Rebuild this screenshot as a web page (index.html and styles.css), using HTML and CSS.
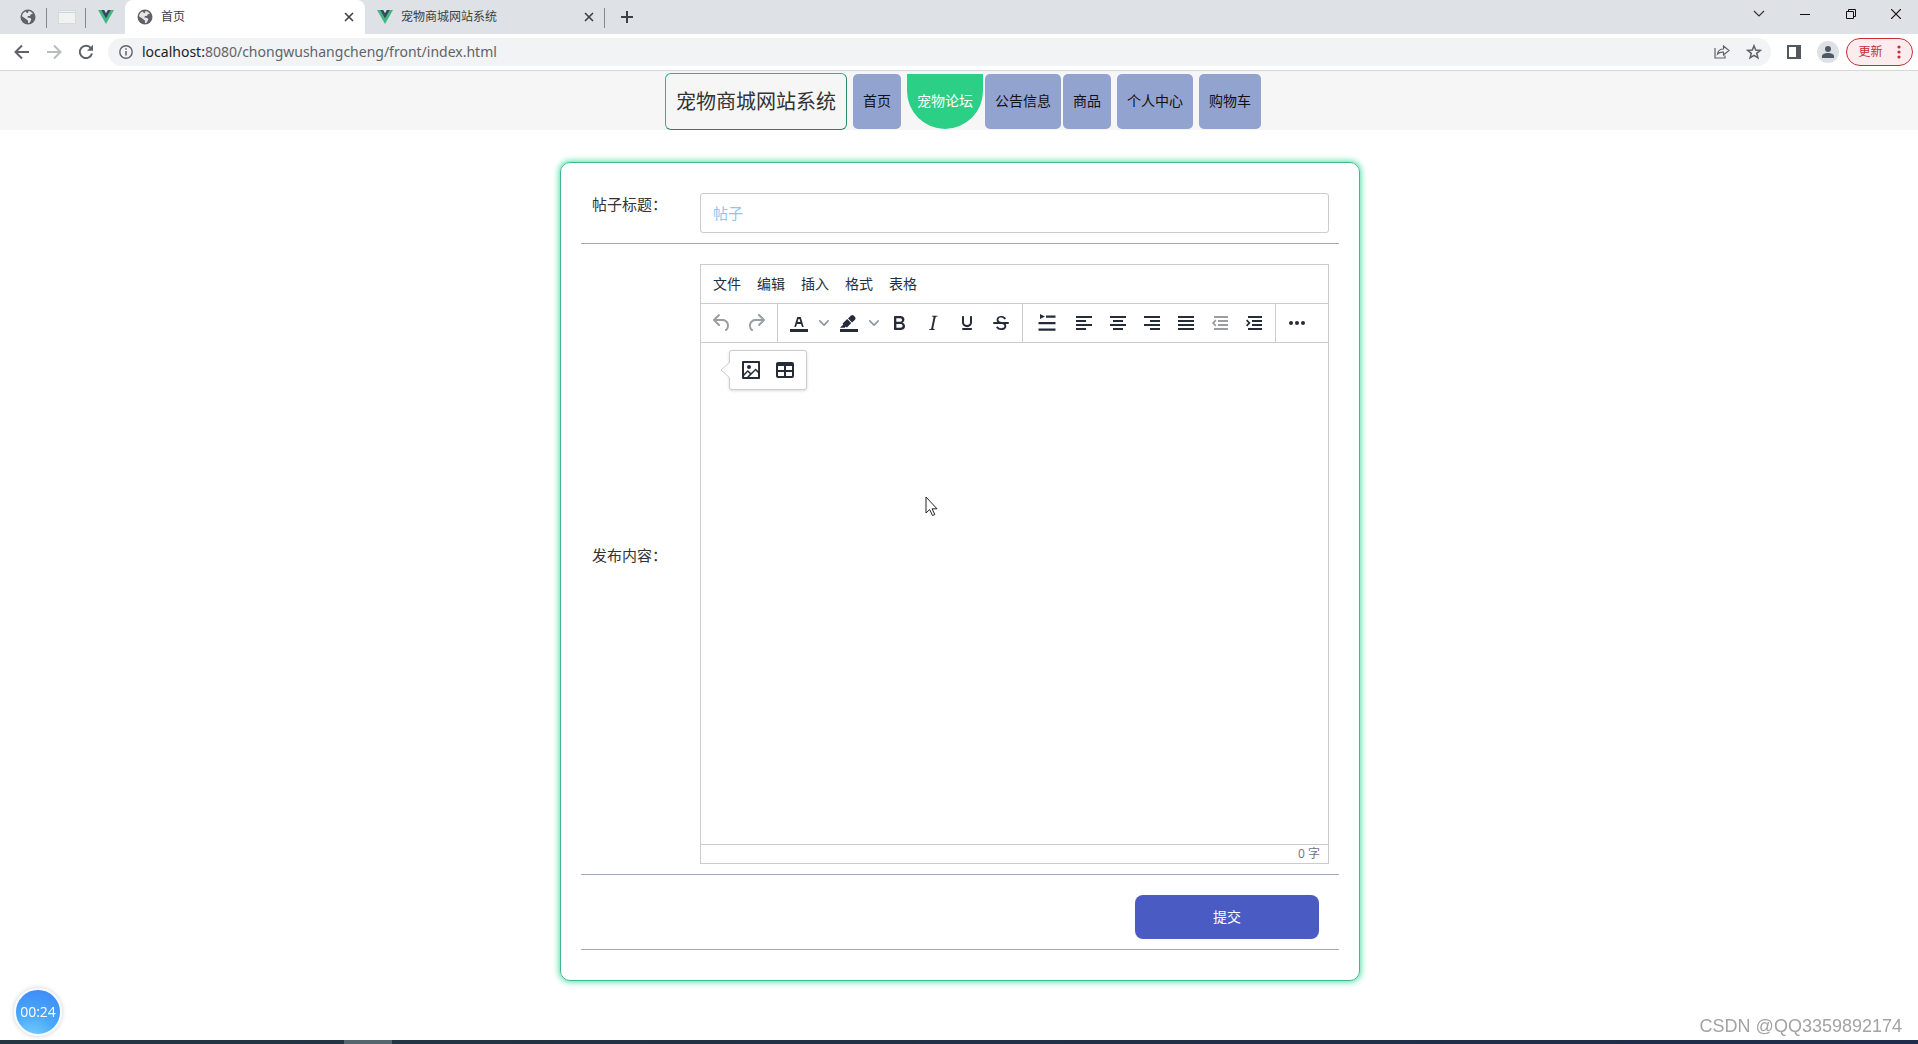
FILE: index.html
```html
<!DOCTYPE html>
<html lang="zh-CN">
<head>
<meta charset="utf-8">
<title>首页</title>
<link rel="stylesheet" href="styles.css">
</head>
<body>
<svg class="defs" aria-hidden="true">
  <symbol id="globe" viewBox="0 0 16 16"><circle cx="8" cy="8" r="7.5" fill="#5f6368"/><path d="M8.500 2c2 .2 3.500 1.300 4.300 3l-2 .2-.9 1.700-2 .2-.5 1.400 3 .5.900 1.500-1.600 3.300-1.800.2.200-2.300L6 10 2 7.300C2.300 4.700 4 3 6 2.500l.4 1.300 1.600.2z" fill="#e4e7ea"/></symbol>
  <symbol id="vue" viewBox="0 0 16 14"><path d="M0 0h3.500L8 7.800 12.500 0H16L8 14z" fill="#41b883"/><path d="M3.200 0h3L8 3.200 9.800 0h3L8 8.500z" fill="#34495e"/></symbol>
  <symbol id="cross" viewBox="0 0 10 10"><path d="M1 1l8 8M9 1l-8 8" stroke="currentColor" stroke-width="1.600" fill="none"/></symbol>
  <symbol id="caret" viewBox="0 0 10 10"><path d="M8.700 2.200c.3-.3.8-.3 1 0 .4.4.4.9 0 1.200L5.700 7.800c-.3.3-.9.3-1.200 0L.2 3.400a.8.8 0 010-1.200c.3-.3.8-.3 1.100 0L5 6l3.700-3.800z"/></symbol>
</svg>

<header class="browser">
  <div class="tabstrip">
    <button class="pinned" aria-label="页面"><svg width="16" height="16"><use href="#globe"/></svg></button>
    <button class="pinned" aria-label="文档"><svg width="18" height="14" viewBox="0 0 18 14"><rect x=".5" y=".5" width="17" height="13" fill="#f0f3f2" stroke="#d3dcd8"/><path d="M1 2.500h16" stroke="#c3dccf"/></svg></button>
    <button class="pinned" aria-label="Vue"><svg width="16" height="14"><use href="#vue"/></svg></button>
    <div class="tab active">
      <svg width="16" height="16"><use href="#globe"/></svg><span class="tab-title">首页</span>
      <button class="close" aria-label="关闭"><svg width="10" height="10"><use href="#cross"/></svg></button>
    </div>
    <div class="tab">
      <svg width="16" height="14"><use href="#vue"/></svg><span class="tab-title">宠物商城网站系统</span>
      <button class="close" aria-label="关闭"><svg width="10" height="10"><use href="#cross"/></svg></button>
    </div>
    <button class="new-tab" aria-label="新标签页"><svg width="12" height="12" viewBox="0 0 12 12"><path d="M6 0v12M0 6h12" stroke="#3c4043" stroke-width="2"/></svg></button>
    <div class="window-controls">
      <button aria-label="搜索标签页"><svg width="12" height="8" viewBox="0 0 12 8"><path d="M1 1l5 5 5-5" fill="none" stroke="#333" stroke-width="1.200"/></svg></button>
      <button aria-label="最小化"><svg width="10" height="10" viewBox="0 0 10 10"><path d="M0 5.500h10" stroke="#111"/></svg></button>
      <button aria-label="还原"><svg width="10" height="10" viewBox="0 0 10 10"><path d="M.5 2.500h7v7h-7zM2.500 2.500v-2h7v7h-2" fill="none" stroke="#111"/></svg></button>
      <button aria-label="关闭窗口"><svg width="10" height="10" viewBox="0 0 10 10"><path d="M0 0l10 10M10 0L0 10" stroke="#111" stroke-width="1.200"/></svg></button>
    </div>
  </div>
  <div class="toolbar">
    <button class="nav-btn" aria-label="后退"><svg width="16" height="16" viewBox="0 0 16 16"><path d="M15 8H2M8 1.500L1.500 8 8 14.500" fill="none" stroke="#5f6368" stroke-width="2"/></svg></button>
    <button class="nav-btn" aria-label="前进"><svg width="16" height="16" viewBox="0 0 16 16"><path d="M1 8h13M8 1.500L14.500 8 8 14.500" fill="none" stroke="#b9bcbf" stroke-width="2"/></svg></button>
    <button class="nav-btn" aria-label="刷新"><svg width="16" height="16" viewBox="0 0 16 16"><path d="M13 4.200A6.200 6.200 0 1014 9.500" fill="none" stroke="#5f6368" stroke-width="2"/><path d="M15 .8v6H9z" fill="#5f6368"/></svg></button>
    <div class="omnibox">
      <svg width="14" height="14" viewBox="0 0 14 14"><circle cx="7" cy="7" r="6.200" fill="none" stroke="#5f6368" stroke-width="1.400"/><path d="M7 6v4.500M7 3.300v1.500" stroke="#5f6368" stroke-width="1.500"/></svg>
      <a class="url" href="#"><span class="host">localhost:</span>8080/chongwushangcheng/front/index.html</a>
      <button aria-label="分享"><svg width="16" height="14" viewBox="0 0 16 14"><path d="M1 3v10h10v-2.500M3.500 9c.5-3.500 2.500-5 6-5V1L15 5.500 9.500 10V7.200C7 7 5 7.500 3.500 9z" fill="none" stroke="#5f6368" stroke-width="1.200"/></svg></button>
      <button aria-label="收藏"><svg width="16" height="16" viewBox="0 0 16 16"><path d="M8 1.800l1.700 4.300 4.500.3-3.500 2.900 1.200 4.500L8 11.300l-3.900 2.500 1.200-4.500-3.500-2.900 4.500-.3z" fill="none" stroke="#5f6368" stroke-width="1.500"/></svg></button>
    </div>
    <button class="panel" aria-label="侧边栏"><svg width="14" height="14" viewBox="0 0 14 14"><path d="M1 1h12v12H1z" fill="none" stroke="#54585c" stroke-width="2"/><path d="M9 1h4v12H9z" fill="#54585c"/></svg></button>
    <button class="avatar" aria-label="用户"><svg width="22" height="22" viewBox="0 0 22 22"><circle cx="11" cy="11" r="11" fill="#dde1e6"/><circle cx="11" cy="8" r="3" fill="#4d5a66"/><path d="M5 17v-2c0-2 3-3 6-3s6 1 6 3v2z" fill="#4d5a66"/></svg></button>
    <button class="update">更新<svg width="4" height="14" viewBox="0 0 4 14"><g fill="#c03038"><circle cx="2" cy="2" r="1.600"/><circle cx="2" cy="7" r="1.600"/><circle cx="2" cy="12" r="1.600"/></g></svg></button>
  </div>
</header>

<nav class="site-nav">
  <h1 class="brand">宠物商城网站系统</h1>
  <a href="#">首页</a>
  <div class="nav-group">
    <a href="#" class="current">宠物论坛</a>
    <a href="#">公告信息</a>
    <a href="#">商品</a>
  </div>
  <a href="#">个人中心</a>
  <a href="#">购物车</a>
</nav>

<main>
  <form class="card">
    <div class="row">
      <label for="title">帖子标题：</label>
      <input id="title" type="text" placeholder="帖子">
    </div>
    <div class="row">
      <label for="content">发布内容：</label>
      <div class="editor">
        <div class="menubar">
          <button type="button">文件</button><button type="button">编辑</button><button type="button">插入</button><button type="button">格式</button><button type="button">表格</button>
        </div>
        <div class="tools">
          <div class="group">
            <button type="button" class="off" aria-label="撤销"><svg viewBox="0 0 24 24"><path d="M6.400 8H12c3.700 0 6.200 2 6.800 5.100.6 2.700-.4 5.600-2.300 6.800a1 1 0 01-1-1.800c1.100-.6 1.800-2.700 1.400-4.600-.5-2.100-2.100-3.500-4.900-3.500H6.400l3.300 3.300a1 1 0 11-1.400 1.400l-5-5a1 1 0 010-1.400l5-5a1 1 0 011.400 1.400L6.400 8z"/></svg></button>
            <button type="button" class="off" aria-label="重做"><svg viewBox="0 0 24 24"><path d="M17.600 10H12c-2.800 0-4.400 1.400-4.900 3.500-.4 2 .3 4 1.400 4.600a1 1 0 11-1 1.800c-2-1.200-2.900-4.100-2.300-6.800.6-3 3-5.100 6.800-5.100h5.600l-3.300-3.300a1 1 0 111.400-1.400l5 5a1 1 0 010 1.400l-5 5a1 1 0 01-1.400-1.400l3.300-3.300z"/></svg></button>
          </div>
          <div class="group">
            <button type="button" aria-label="文字颜色"><svg viewBox="0 0 24 24"><path d="M3 18h18v3H3zM8.700 16h-.8a.5.5 0 01-.5-.6l2.700-9c.1-.3.3-.4.5-.4h2.800c.2 0 .4.1.5.4l2.700 9a.5.5 0 01-.5.600h-.8a.5.5 0 01-.4-.4l-.7-2.200c0-.3-.3-.4-.5-.4h-3.400c-.2 0-.4.1-.5.4l-.7 2.200c0 .3-.2.4-.4.4zm2.600-7.600l-.6 2a.5.5 0 00.5.600h1.600a.5.5 0 00.5-.6l-.6-2c0-.3-.3-.4-.5-.4h-.4c-.2 0-.4.1-.5.4z"/></svg></button>
            <button type="button" class="more" aria-label="更多文字颜色"><svg><use href="#caret"/></svg></button>
            <button type="button" aria-label="背景色"><svg viewBox="0 0 24 24"><path d="M3 18h18v3H3zM7.700 16.700H3l3.300-3.300-.7-.8L10.200 8l4 4.100-4 4.200c-.2.2-.6.2-.8 0l-.6-.7-1.100 1.100zm3.300-9.300l3-2.900a2 2 0 012.600 0L18 6c.7.7.7 2 0 2.700l-2.900 2.900z"/></svg></button>
            <button type="button" class="more" aria-label="更多背景色"><svg><use href="#caret"/></svg></button>
            <button type="button" aria-label="粗体"><svg viewBox="0 0 24 24"><path d="M7.800 19c-.3 0-.5 0-.6-.2l-.2-.5V5.700c0-.2 0-.4.2-.5l.6-.2h5c1.500 0 2.700.3 3.500 1 .7.600 1.100 1.400 1.100 2.500a3 3 0 01-.6 1.900c-.4.600-1 1-1.600 1.200.4.1.9.3 1.300.600s.8.700 1 1.200c.4.4.5 1 .5 1.600 0 1.300-.4 2.300-1.300 3-.8.700-2.100 1-3.800 1H7.800zm5-8.300c.6 0 1.200-.1 1.600-.5.4-.3.6-.7.6-1.300 0-1.100-.8-1.700-2.300-1.700H9.300v3.500h3.400zm.5 6c.7 0 1.300-.1 1.700-.4.4-.4.6-.9.6-1.500s-.2-1-.7-1.400c-.4-.3-1-.4-2-.4H9.400v3.800h4z" fill-rule="evenodd"/></svg></button>
            <button type="button" aria-label="斜体"><svg viewBox="0 0 24 24"><path d="M16.700 4.700l-.1.900h-.3c-.6 0-1 0-1.400.3-.3.3-.4.6-.5 1.100l-2.100 9.800v.6c0 .5.4.8 1.400.8h.2l-.2.8H8l.2-.8h.2c1.100 0 1.800-.5 2-1.500l2-9.800.1-.5c0-.6-.4-.8-1.400-.8h-.3l.2-.9h5.800z"/></svg></button>
            <button type="button" aria-label="下划线"><svg viewBox="0 0 24 24"><path d="M16 5c.6 0 1 .4 1 1v5.500a4 4 0 01-.4 1.800l-1 1.400a5.300 5.300 0 01-5.500 1 5 5 0 01-1.600-1c-.5-.4-.8-.9-1.100-1.400a4 4 0 01-.4-1.800V6c0-.6.4-1 1-1s1 .4 1 1v5.500c0 .3 0 .6.2 1l.6.7a3.300 3.300 0 002.200.8 3.400 3.400 0 002.200-.8c.3-.2.4-.5.6-.8l.2-.9V6c0-.6.4-1 1-1zM8 17h8c.6 0 1 .4 1 1s-.4 1-1 1H8a1 1 0 010-2z"/></svg></button>
            <button type="button" aria-label="删除线"><svg viewBox="0 0 24 24"><path d="M15.600 8.500c-.5-.7-1-1.100-1.300-1.300-.6-.4-1.300-.6-2-.6-2.700 0-2.800 1.700-2.800 2.100 0 1.600 1.800 2 3.200 2.300 4.400.9 4.600 2.800 4.600 3.900 0 1.400-.7 4.100-5 4.100A6.200 6.200 0 017 16.400l1.500-1.100c.4.6 1.600 2 3.700 2 1.600 0 2.500-.4 3-1.200.4-.8.3-2-.8-2.600-.7-.4-1.600-.7-2.900-1-1-.2-3.900-.8-3.900-3.600C7.600 6 10.300 5 12.400 5c2.900 0 4.200 1.600 4.700 2.400l-1.500 1.100zM5 11h14a1 1 0 010 2H5a1 1 0 010-2z"/></svg></button>
          </div>
          <div class="group">
            <button type="button" class="wide" aria-label="首行缩进"><svg viewBox="0 0 24 24"><path d="M3.500 11h17v2.200h-17zM3.500 17.500h17v2.200h-17zM11 4.500h9.500v2.200H11zM5 3l5 2.600L5 8z"/></svg></button>
            <button type="button" aria-label="左对齐"><svg viewBox="0 0 24 24"><path d="M4 5h16v2H4zM4 9h10v2H4zM4 13h16v2H4zM4 17h10v2H4z"/></svg></button>
            <button type="button" aria-label="居中"><svg viewBox="0 0 24 24"><path d="M4 5h16v2H4zM7 9h10v2H7zM4 13h16v2H4zM7 17h10v2H7z"/></svg></button>
            <button type="button" aria-label="右对齐"><svg viewBox="0 0 24 24"><path d="M4 5h16v2H4zM10 9h10v2H10zM4 13h16v2H4zM10 17h10v2H10z"/></svg></button>
            <button type="button" aria-label="两端对齐"><svg viewBox="0 0 24 24"><path d="M4 5h16v2H4zM4 9h16v2H4zM4 13h16v2H4zM4 17h16v2H4z"/></svg></button>
            <button type="button" class="off" aria-label="减少缩进"><svg viewBox="0 0 24 24"><path d="M6 5h14v2H6zM10 9h10v2H10zM10 13h10v2H10zM6 17h14v2H6zM7.300 8.600L8.500 9.800 6.300 12l2.200 2.200-1.200 1.200L3.900 12z"/></svg></button>
            <button type="button" aria-label="增加缩进"><svg viewBox="0 0 24 24"><path d="M6 5h14v2H6zM10 9h10v2H10zM10 13h10v2H10zM6 17h14v2H6zM5.200 8.600L4 9.800 6.200 12 4 14.200l1.200 1.200L8.600 12z"/></svg></button>
          </div>
          <div class="group">
            <button type="button" aria-label="更多"><svg viewBox="0 0 24 24"><circle cx="6" cy="12" r="2"/><circle cx="12" cy="12" r="2"/><circle cx="18" cy="12" r="2"/></svg></button>
          </div>
        </div>
        <div class="canvas">
          <textarea id="content"></textarea>
          <div class="quickbar">
            <svg class="tip" width="10" height="18" viewBox="0 0 10 18"><path d="M10 1L1 9l9 8" fill="#fff" stroke="#ccc"/></svg>
            <button type="button" aria-label="插入图片"><svg viewBox="0 0 24 24"><path fill-rule="evenodd" d="M5 15.700l3.300-3.200c.3-.3.7-.3 1 0L12 15l4.100-4c.3-.4.8-.4 1 0l2 1.900V5H5v10.700zM5 18V19h3l2.800-2.900-2-2L5 17.900zm14-3l-2.500-2.400-6.400 6.500H19v-4zM4 3h16c.6 0 1 .4 1 1v16c0 .6-.4 1-1 1H4a1 1 0 01-1-1V4c0-.6.4-1 1-1z"/><circle cx="10" cy="9" r="2"/></svg></button>
            <button type="button" aria-label="插入表格"><svg viewBox="0 0 24 24"><path fill-rule="evenodd" d="M19 4a2 2 0 012 2v12a2 2 0 01-2 2H5a2 2 0 01-2-2V6c0-1.100.9-2 2-2h14zM5 14v4h6v-4H5zm14 0h-6v4h6v-4zm0-6h-6v4h6V8zM5 12h6V8H5v4z"/></svg></button>
          </div>
          <svg class="pointer" width="14" height="21" viewBox="0 0 14 21"><path d="M1 1v16l3.700-3.500L7.500 19.500l2.300-1-2.700-5.700H12z" fill="#fff" stroke="#222"/></svg>
        </div>
        <div class="status">0 字</div>
      </div>
    </div>
    <div class="row actions">
      <button type="submit" class="submit">提交</button>
    </div>
  </form>
</main>

<div class="timer">00:24</div>
<div class="watermark">CSDN @QQ3359892174</div>
<footer class="taskbar"><span></span></footer>
</body>
</html>
```
FILE: styles.css
```css
* { box-sizing: border-box; }
body {
  margin: 0;
  min-height: 100vh;
  background: #fff;
  color: #333;
  font: 14px/20px "Open Sans", "Noto Sans CJK SC", sans-serif;
}
button, input, textarea { font: inherit; color: inherit; }
button { display: flex; align-items: center; justify-content: center; padding: 0; border: 0; background: none; }
a { color: inherit; text-decoration: none; }
svg { flex: none; display: block; }
.defs { position: absolute; width: 0; height: 0; }

/* browser frame */
.browser { border-bottom: 1px solid #d5d6d8; }
.tabstrip { display: flex; height: 34px; padding-left: 8px; background: #dee1e6; }
.pinned { position: relative; width: 39px; }
.pinned:nth-child(-n+2)::after,
.tab:not(.active)::after {
  content: "";
  position: absolute;
  right: 0;
  top: 8px;
  width: 1px;
  height: 20px;
  background: #85898e;
}
.tab {
  position: relative;
  display: flex;
  align-items: center;
  gap: 8px;
  width: 240px;
  padding: 0 11px 0 12px;
  font-size: 12px;
  color: #3c4043;
}
.tab.active { background: #fff; border-radius: 8px 8px 0 0; }
.tab-title { flex: 1; }
.close { width: 10px; color: #3c4043; }
.new-tab { width: 44px; }
.window-controls { display: flex; margin-left: auto; height: 28px; }
.window-controls button { width: 46px; }
.window-controls button:last-child { width: 44px; }

.toolbar { display: flex; align-items: center; height: 36px; padding: 0 5px 0 6px; background: #fff; }
.nav-btn { width: 32px; }
.omnibox {
  flex: 1;
  display: flex;
  align-items: center;
  height: 28px;
  margin-left: 6px;
  padding: 0 1px 0 11px;
  border-radius: 14px;
  background: #f1f3f4;
}
.url { flex: 1; margin-left: 9px; color: #5f6368; font-family: "Noto Sans", sans-serif; }
.host { color: #202124; }
.omnibox button { width: 32px; }
.panel { width: 46px; }
.avatar { width: 22px; margin-right: 7px; }
.update {
  gap: 14px;
  width: 67px;
  height: 28px;
  border: 1px solid #c03038;
  border-radius: 14px;
  background: #fdeced;
  color: #c03038;
  font-size: 12px;
}

/* site navigation */
.site-nav {
  display: flex;
  justify-content: center;
  align-items: center;
  gap: 6px;
  padding: 2px 0 0 8px;
  background: #f6f6f6;
}
.brand {
  margin: 0;
  padding: 0 10px;
  border: 1px solid;
  border-color: #35b189 #2e8b6e #2f7f66 #35b189;
  border-radius: 6px;
  font-size: 20px;
  font-weight: 400;
  line-height: 55px;
}
.nav-group { display: flex; gap: 2px; }
.site-nav a {
  padding: 0 10px 2px;
  border-radius: 5px;
  background: #93a3cf;
  color: #111;
  line-height: 53px;
}
.site-nav .current { border-radius: 0 0 38px 38px; background: #2bcf85; color: #fff; }

/* post form */
main { padding: 32px 0 60px 2px; }
.card {
  max-width: 800px;
  margin: 0 auto;
  padding: 10px 20px 30px;
  border: 1px solid #3fb88f;
  border-radius: 10px;
  box-shadow: 0 0 6px 1px #4fe0a5;
}
.row {
  display: flex;
  align-items: center;
  padding: 20px 10px 10px;
  border-bottom: 1px solid #a0a6bc;
}
.row label { width: 109px; padding: 0 0 18px 1px; font-size: 15px; }
.row input {
  flex: 1;
  height: 40px;
  padding: 0 12px;
  border: 1px solid #ccc;
  border-radius: 3px;
  font-size: 15px;
  outline: 0;
}
.row input::placeholder { color: #8ec5f2; }
.editor { flex: 1; display: flex; flex-direction: column; height: 600px; border: 1px solid #ccc; }
.menubar { display: flex; height: 39px; padding: 0 4px; border-bottom: 1px solid #ccc; color: #222f3e; }
.menubar button { padding: 0 8px; }
.tools { display: flex; height: 39px; border-bottom: 1px solid #ccc; }
.group { display: flex; padding: 0 4px; border-right: 1px solid #ccc; }
.group:last-child { border: 0; }
.group button, .quickbar button { width: 34px; }
.group .wide { width: 40px; }
.group .more { width: 16px; }
.group svg, .quickbar button svg { width: 24px; height: 24px; fill: #262b38; }
.group .more svg { width: 10px; height: 10px; fill: #8d949c; }
.group .off svg { fill: #9a9da1; }
.canvas { position: relative; flex: 1; display: flex; }
.canvas textarea { flex: 1; border: 0; padding: 12px; resize: none; outline: 0; background: #fff; }
.quickbar {
  position: absolute;
  left: 28px;
  top: 7px;
  display: flex;
  height: 40px;
  padding: 0 4px;
  border: 1px solid #ccc;
  border-radius: 3px;
  background: #fff;
  box-shadow: 0 1px 3px rgba(0, 0, 0, .15);
}
.tip { position: absolute; left: -10px; top: 10px; }
.pointer { position: absolute; left: 224px; top: 153px; }
.status {
  padding-right: 8px;
  border-top: 1px solid #ccc;
  color: #6b7480;
  font-size: 12px;
  line-height: 18px;
  text-align: right;
}
.actions { justify-content: flex-end; padding-right: 20px; }
.submit { width: 184px; height: 44px; border-radius: 8px; background: #4a5cc4; color: #fff; }

/* desktop overlays */
.timer {
  position: fixed;
  left: 14px;
  bottom: 8px;
  width: 48px;
  height: 48px;
  border: 2px solid #f4fbff;
  border-radius: 50%;
  background: radial-gradient(circle at 35% 115%, #7fd3fb 0, #4aa8fa 45%, #3b86f7 100%);
  box-shadow: 0 0 5px rgba(0, 0, 0, .2);
  color: #fff;
  line-height: 44px;
  text-align: center;
}
.watermark {
  position: fixed;
  right: 16px;
  bottom: 8px;
  color: #a3a3a3;
  font: 18px/20px "Liberation Sans", Arial, sans-serif;
}
.taskbar {
  position: fixed;
  left: 0;
  right: 0;
  bottom: 0;
  height: 4px;
  padding-left: 344px;
  background: linear-gradient(90deg, #243642, #1f2c4b);
}
.taskbar span { display: block; width: 48px; height: 4px; background: #56666f; }
```
